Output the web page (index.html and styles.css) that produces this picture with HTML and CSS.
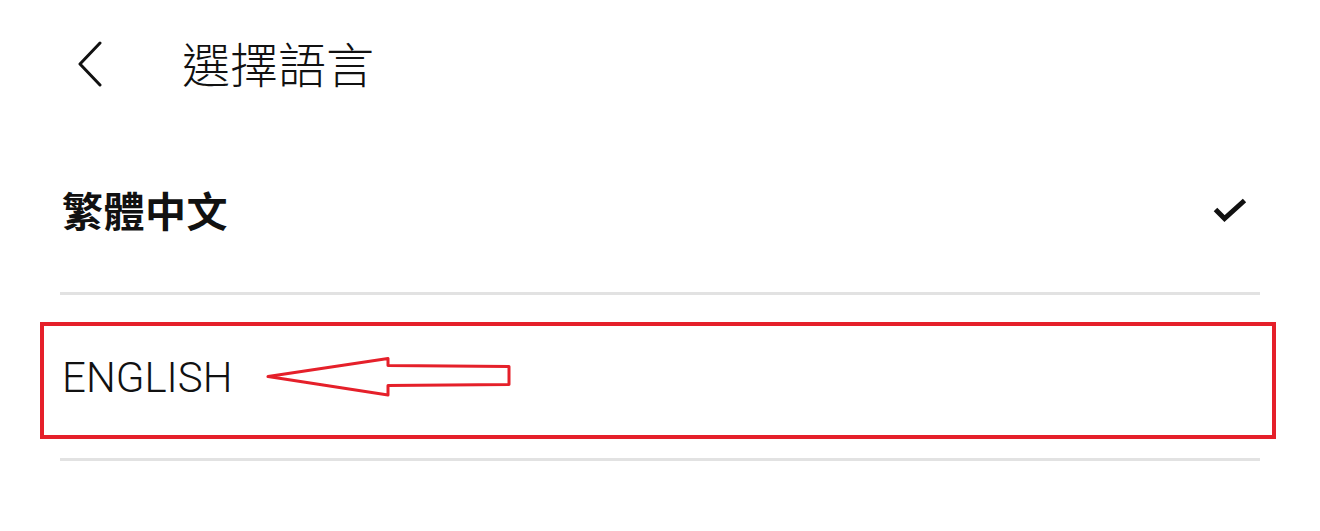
FILE: index.html
```html
<!DOCTYPE html>
<html lang="zh-Hant">
<head>
<meta charset="utf-8">
<title>選擇語言</title>
<link rel="stylesheet" href="styles.css">
</head>
<body>
<div class="page">
  <header class="header">
    <button class="back" aria-label="返回">
      <svg width="28" height="46" viewBox="0 0 28 46"><path d="M24 2 L4 23 L24 44" fill="none" stroke="#111" stroke-width="3" stroke-linecap="round" stroke-linejoin="round"/></svg>
    </button>
    <h1 class="title">選擇語言</h1>
  </header>
  <ul class="list">
    <li class="item">
      <span class="label label-bold">繁體中文</span>
      <svg class="check" width="34" height="25" viewBox="0 0 34 25"><path d="M2.5 11.5 L11.5 20.5 L31.5 2.5" fill="none" stroke="#111" stroke-width="5" stroke-linejoin="miter"/></svg>
    </li>
    <li class="item item-marked">
      <span class="label label-light">ENGLISH</span>
      <div class="mark-box"></div>
      <svg class="mark-arrow" width="250" height="44" viewBox="0 0 250 44"><path d="M2 19.5 L122 1.5 L122 8.5 L243 9.5 L243 27.5 L122 28.5 L122 38 Z" fill="none" stroke="#e5202a" stroke-width="3" stroke-linejoin="round"/></svg>
    </li>
  </ul>
</div>
</body>
</html>
```
FILE: styles.css
```css
* { box-sizing: border-box; }
html, body { margin: 0; padding: 0; background: #fff; }
body {
  width: 1320px;
  height: 531px;
  overflow: hidden;
  font-family: "Noto Sans CJK TC", "Noto Sans", sans-serif;
  color: #111;
}
.header {
  height: 129px;
  display: flex;
  align-items: center;
  padding-left: 76px;
  padding-bottom: 2px;
}
.back {
  border: 0;
  background: none;
  padding: 0;
  margin: 0;
  width: 28px;
  height: 46px;
  display: flex;
  align-items: center;
  justify-content: center;
}
.title {
  margin: -4px 0 0 78px;
  font-size: 48px;
  font-weight: 300;
  line-height: 1;
  color: #111;
}
.list {
  list-style: none;
  margin: 0 60px;
  padding: 0;
}
.item {
  position: relative;
  height: 166px;
  display: flex;
  align-items: center;
  justify-content: space-between;
  border-bottom: 3px solid #e2e2e2;
  padding: 3px 13px 0 2px;
}
.label { line-height: 1; }
.label-bold {
  font-size: 41px;
  font-weight: 700;
  letter-spacing: 0.5px;
  margin-top: -6px;
}
.label-light {
  font-family: Roboto, "Noto Sans", sans-serif;
  font-weight: 300;
  font-size: 42px;
  color: #111;
}
.check { margin-top: -3px; }
.mark-box {
  position: absolute;
  left: -20px;
  right: -16px;
  top: 27px;
  height: 117px;
  border: 4px solid #e5202a;
}
.mark-arrow {
  position: absolute;
  left: 206px;
  top: 62px;
}
```
